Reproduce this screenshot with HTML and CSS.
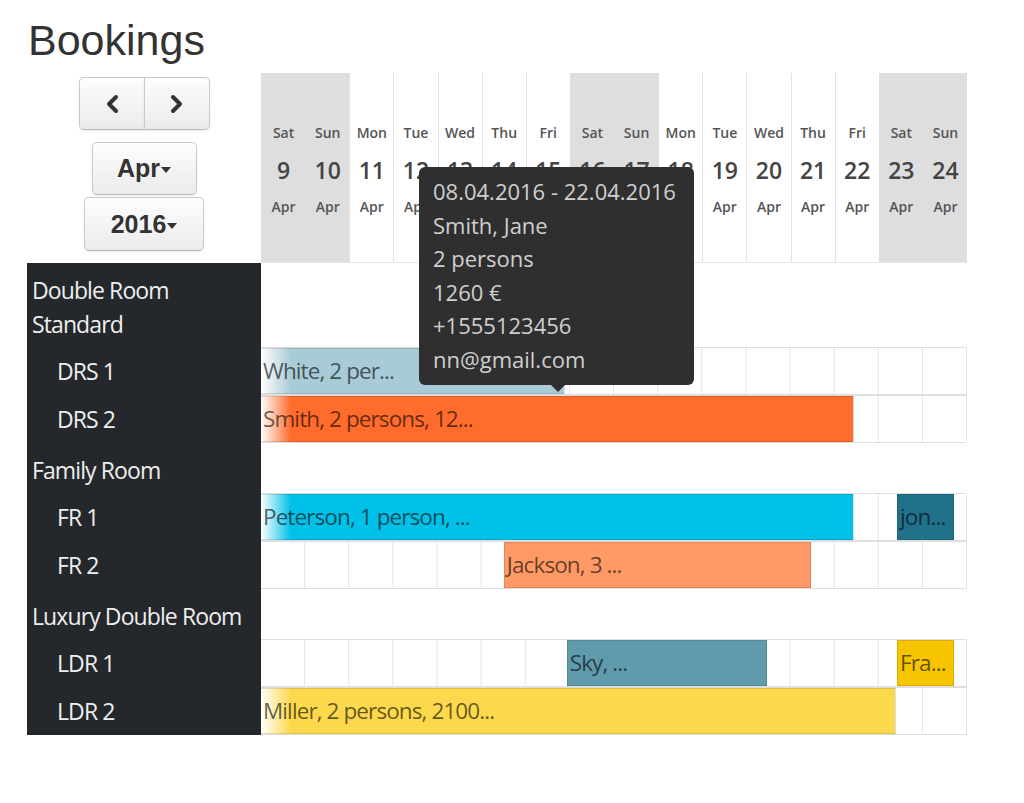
FILE: index.html
```
<html>
<head>
    <title>Bookings</title>
    <link rel="stylesheet" href="styles.css">
</head>
<body>
    <div class="page">
        <h1 class="title">Bookings</h1>

        <div class="calendar">
            <div class="cal-head">
                <div class="controls">
                    <div class="btn-group">
                        <button class="btn btn-nav btn-prev">
                            <svg width="16" height="20" viewBox="0 0 16 20"><polyline points="12,3 5,10 12,17" fill="none" stroke="#333" stroke-width="4" stroke-linecap="round" stroke-linejoin="round"/></svg>
                        </button>
                        <button class="btn btn-nav btn-next">
                            <svg width="16" height="20" viewBox="0 0 16 20"><polyline points="4,3 11,10 4,17" fill="none" stroke="#333" stroke-width="4" stroke-linecap="round" stroke-linejoin="round"/></svg>
                        </button>
                    </div>
                    <button class="btn btn-month">Apr<span class="caret"></span></button>
                    <button class="btn btn-year">2016<span class="caret"></span></button>
                </div>
                <div class="days">
                    <div class="day weekend"><span class="dow">Sat</span><span class="num">9</span><span class="mon">Apr</span></div>
                    <div class="day weekend"><span class="dow">Sun</span><span class="num">10</span><span class="mon">Apr</span></div>
                    <div class="day"><span class="dow">Mon</span><span class="num">11</span><span class="mon">Apr</span></div>
                    <div class="day"><span class="dow">Tue</span><span class="num">12</span><span class="mon">Apr</span></div>
                    <div class="day"><span class="dow">Wed</span><span class="num">13</span><span class="mon">Apr</span></div>
                    <div class="day"><span class="dow">Thu</span><span class="num">14</span><span class="mon">Apr</span></div>
                    <div class="day"><span class="dow">Fri</span><span class="num">15</span><span class="mon">Apr</span></div>
                    <div class="day weekend"><span class="dow">Sat</span><span class="num">16</span><span class="mon">Apr</span></div>
                    <div class="day weekend"><span class="dow">Sun</span><span class="num">17</span><span class="mon">Apr</span></div>
                    <div class="day"><span class="dow">Mon</span><span class="num">18</span><span class="mon">Apr</span></div>
                    <div class="day"><span class="dow">Tue</span><span class="num">19</span><span class="mon">Apr</span></div>
                    <div class="day"><span class="dow">Wed</span><span class="num">20</span><span class="mon">Apr</span></div>
                    <div class="day"><span class="dow">Thu</span><span class="num">21</span><span class="mon">Apr</span></div>
                    <div class="day"><span class="dow">Fri</span><span class="num">22</span><span class="mon">Apr</span></div>
                    <div class="day weekend"><span class="dow">Sat</span><span class="num">23</span><span class="mon">Apr</span></div>
                    <div class="day weekend"><span class="dow">Sun</span><span class="num">24</span><span class="mon">Apr</span></div>
                </div>
            </div>

            <div class="row group">
                <div class="label">Double Room<br>Standard</div>
                <div class="lane"></div>
            </div>
            <div class="row unit">
                <div class="label">DRS 1</div>
                <div class="lane">
                    <div class="bar bar-lightblue from-before" style="left: 0%; width: 43.1%">White, 2 per...</div>
                </div>
            </div>
            <div class="row unit">
                <div class="label">DRS 2</div>
                <div class="lane">
                    <div class="bar bar-orange from-before" style="left: 0%; width: 84%">Smith, 2 persons, 12...</div>
                </div>
            </div>

            <div class="row group">
                <div class="label">Family Room</div>
                <div class="lane"></div>
            </div>
            <div class="row unit">
                <div class="label">FR 1</div>
                <div class="lane">
                    <div class="bar bar-cyan from-before" style="left: 0%; width: 84%">Peterson, 1 person, ...</div>
                    <div class="bar bar-teal" style="left: 90.1%; width: 8.1%">jon...</div>
                </div>
            </div>
            <div class="row unit">
                <div class="label">FR 2</div>
                <div class="lane">
                    <div class="bar bar-salmon" style="left: 34.4%; width: 43.5%">Jackson, 3 ...</div>
                </div>
            </div>

            <div class="row group">
                <div class="label">Luxury Double Room</div>
                <div class="lane"></div>
            </div>
            <div class="row unit">
                <div class="label">LDR 1</div>
                <div class="lane">
                    <div class="bar bar-steel" style="left: 43.3%; width: 28.4%">Sky, ...</div>
                    <div class="bar bar-gold" style="left: 90.1%; width: 8.1%">Fra...</div>
                </div>
            </div>
            <div class="row unit">
                <div class="label">LDR 2</div>
                <div class="lane">
                    <div class="bar bar-yellow from-before" style="left: 0%; width: 89.9%">Miller, 2 persons, 2100...</div>
                </div>
            </div>

            <div class="tooltip">
                08.04.2016 - 22.04.2016<br>
                Smith, Jane<br>
                2 persons<br>
                1260 €<br>
                +1555123456<br>
                nn@gmail.com
            </div>
        </div>
    </div>
</body>
</html>
```
FILE: styles.css
```
body {
    margin: 0;
    background: #fff;
    font-family: "Open Sans", "DejaVu Sans", sans-serif;
}
.page {
    width: 940px;
    padding: 16px 0 0 27px;
}
.title {
    margin: 0 0 9px 1px;
    font: normal 43px/48px "Liberation Sans", Arial, sans-serif;
    color: #333;
}

/* calendar head */
.calendar { position: relative; }
.cal-head { display: flex; height: 190px; }
.controls {
    width: 234px;
    display: flex;
    flex-direction: column;
    align-items: center;
    padding-top: 4px;
    box-sizing: border-box;
}
.btn-group { display: flex; margin-bottom: 12px; }
.btn {
    height: 53px;
    padding: 0;
    border: 1px solid #c9c9c9;
    border-bottom-color: #b9b9b9;
    border-radius: 5px;
    background: linear-gradient(#fdfdfd, #ebebeb);
    box-shadow: 0 1px 2px rgba(0,0,0,0.08);
    font: bold 25px "Liberation Sans", Arial, sans-serif;
    color: #333;
}
.btn-nav {
    width: 66px;
    display: flex;
    align-items: center;
    justify-content: center;
}
.btn-prev { border-radius: 5px 0 0 5px; }
.btn-next { border-radius: 0 5px 5px 0; margin-left: -1px; }
.btn-month { width: 105px; margin-bottom: 2px; }
.btn-year { width: 120px; height: 54px; }
.caret {
    display: inline-block;
    vertical-align: middle;
    margin-left: 1px;
    border-top: 6px solid #333;
    border-left: 5px solid transparent;
    border-right: 5px solid transparent;
}

.days {
    flex: 1;
    display: grid;
    grid-template-columns: repeat(16, 1fr);
    border-bottom: 1px solid #e6e6e6;
}
.day {
    text-align: center;
    padding-top: 48px;
    border-left: 1px solid #e2e2e2;
    color: #555;
}
.day.weekend { background: #dedede; border-left-color: #dedede; }
.dow, .mon {
    display: block;
    font-size: 14px;
    font-weight: 600;
    line-height: 24px;
}
.num {
    display: block;
    font-size: 23px;
    font-weight: 600;
    line-height: 50px;
    color: #444;
}

/* rows */
.row { display: flex; }
.label {
    width: 234px;
    flex-shrink: 0;
    box-sizing: border-box;
    background: #24282c;
    color: #eee;
    font-size: 23px;
    letter-spacing: -0.9px;
}
.lane { flex: 1; position: relative; }
.group .label { padding: 10px 0 6px 5px; line-height: 34px; }
.unit { height: 48px; }
.unit .label { padding-left: 30px; line-height: 48px; }
.unit .lane {
    border-top: 1px solid #dedede;
    border-bottom: 1px solid #dedede;
    background-image: linear-gradient(to left, #e3e3e3 1px, transparent 1px);
    background-size: 6.25% 100%;
}

/* bookings */
.bar {
    position: absolute;
    top: 0;
    bottom: 0;
    box-sizing: border-box;
    padding-left: 2px;
    border: 1px solid rgba(0,0,0,0.12);
    font-size: 22.5px;
    letter-spacing: -0.9px;
    line-height: 44px;
    color: rgba(0,0,0,0.62);
    white-space: nowrap;
    overflow: hidden;
}
.bar.from-before {
    border-left: none;
    background-image: linear-gradient(to right, #fff, rgba(255,255,255,0) 30px);
}
.bar-lightblue { background-color: #a9cbd7; }
.bar-orange { background-color: #ff6c2c; }
.bar-cyan { background-color: #00c1e7; }
.bar-teal { background-color: #22718b; }
.bar-salmon { background-color: #ff9a66; }
.bar-steel { background-color: #5f9bac; }
.bar-gold { background-color: #f6c500; }
.bar-yellow { background-color: #fcd94c; }

.tooltip {
    position: absolute;
    left: 392px;
    top: 94px;
    width: 275px;
    box-sizing: border-box;
    padding: 8px 14px 9px;
    background: #2f2f2f;
    border-radius: 6px;
    color: #cfcfcf;
    font-size: 22px;
    line-height: 33.5px;
    white-space: nowrap;
}
.tooltip::after {
    content: "";
    position: absolute;
    top: 100%;
    left: 132px;
    border: 7px solid transparent;
    border-bottom: 0;
    border-top-color: #2f2f2f;
}
```
